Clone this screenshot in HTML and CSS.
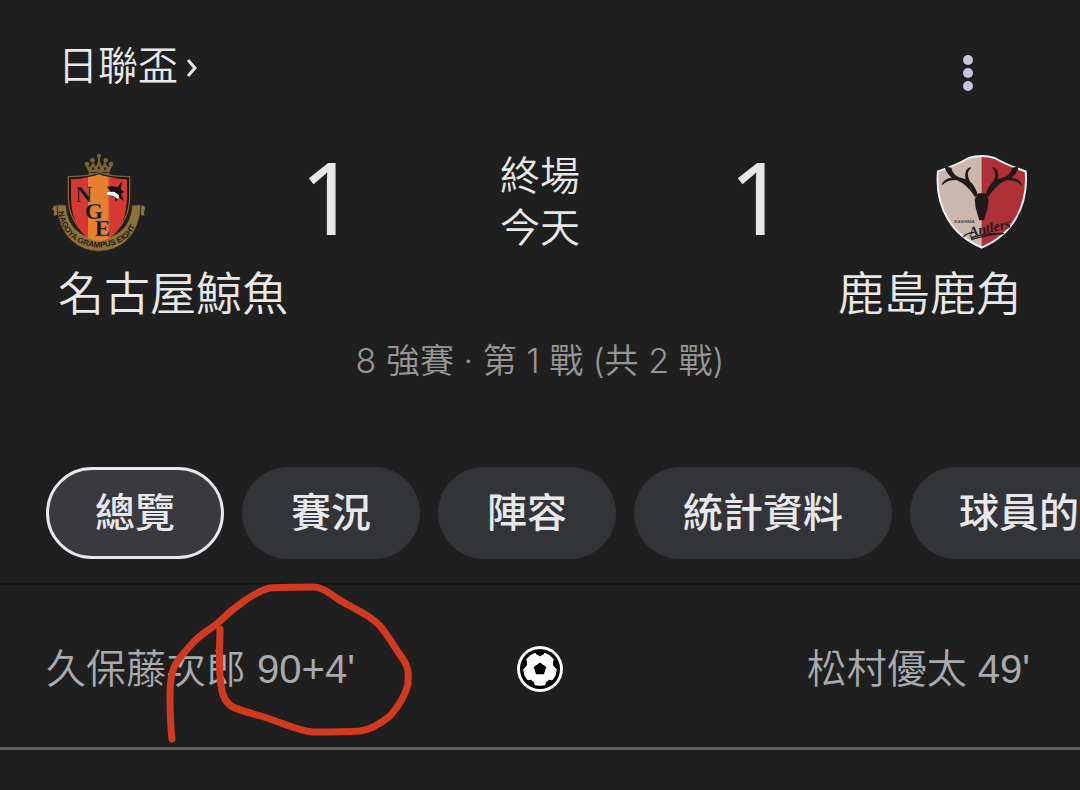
FILE: index.html
```
<!DOCTYPE html>
<html lang="zh-Hant">
<head>
    <meta charset="UTF-8">
    <meta name="viewport" content="width=device-width, initial-scale=1.0">
    <title>名古屋鯨魚 1 - 1 鹿島鹿角</title>
    <link rel="stylesheet" href="styles.css">
</head>
<body>

    <header class="top-bar">
        <a href="#" class="league">日聯盃
            <svg class="chevron" viewBox="0 0 12 18" aria-hidden="true"><path d="M2 1l7 8-7 8"/></svg>
        </a>
        <button type="button" class="menu-btn" aria-label="更多選項">
            <svg viewBox="0 0 10 36"><circle cx="5" cy="5" r="5"/><circle cx="5" cy="18" r="5"/><circle cx="5" cy="31" r="5"/></svg>
        </button>
    </header>

    <main>
        <section class="match">
            <div class="score-row">
                <svg class="crest" viewBox="34 26 279 297" role="img" aria-label="名古屋鯨魚">
                    <!-- crown -->
                    <g fill="#7d6435">
                        <circle cx="175" cy="34" r="6"/><rect x="172" y="38" width="6" height="12"/>
                        <circle cx="139" cy="59" r="7"/><circle cx="155" cy="48" r="7"/><circle cx="195" cy="48" r="7"/><circle cx="211" cy="59" r="7"/>
                        <path d="M134 61l11 24h60l11-24-14 7-10-15-8 14-9-23-9 23-8-14-10 15z"/>
                        <path d="M144 86h62v8h-62z"/>
                    </g>
                    <g fill="#2a2118"><circle cx="157" cy="73" r="4"/><circle cx="175" cy="71" r="4"/><circle cx="193" cy="73" r="4"/><path d="M149 83h52v3h-52z"/></g>
                    <!-- ribbon -->
                    <path d="M49 183l-10 2-4 10 5 5-1 14 10-2zM301 183l10 2 4 10-5 5 1 14-10-2z" fill="#8c713e"/>
                    <path d="M49 181l27 1q4 58 41 83 58 37 116 0 37-25 41-83l27-1q-1 69-44 109-35 31-82 31t-82-31q-43-40-44-109z" fill="#8c713e" stroke="#30281a" stroke-width="3"/>
                    <!-- shield -->
                    <path d="M83 97q55 0 92-13 37 13 92 13v65q-4 95-92 129-88-34-92-129z" fill="#171411" stroke="#806437" stroke-width="4"/>
                    <path d="M91 105q28 0 50-7v182q-48-35-50-118zM209 98q22 7 50 7v57q-2 83-50 118z" fill="#d93830"/>
                    <path d="M141 98q20-2 34-8 14 6 34 8v182q-16 8-34 12-18-4-34-12z" fill="#e6802f"/>
                    <path d="M203 97l6 1v182l-6 3z" fill="#e84136"/>
                    <!-- orca -->
                    <path d="M199 127l18-2 13 4 14-18-4 24 11 7-10 7 9 21-15-10-10 13-3-15-21-5 12-8z" fill="#17120f"/>
                    <path d="M200 143l20-1 16 11-3 12-15-10-18-3z" fill="#fff"/>
                    <g class="monogram">
                        <text x="104" y="172">N</text>
                        <text x="132" y="224">G</text>
                        <text x="162" y="276">E</text>
                    </g>
                    <path id="ribbonLine" d="M53 202Q65 274 119 297 175 322 231 297 287 274 297 194" fill="none"/>
                    <text class="ribbon-text"><textPath href="#ribbonLine">NAGOYA GRAMPUS EIGHT</textPath></text>
                </svg>
                <span class="score home">1</span>
                <p class="status">終場<br>今天</p>
                <span class="score">1</span>
                <svg class="crest" viewBox="31 26 279 297" role="img" aria-label="鹿島鹿角">
                    <clipPath id="shieldLeft"><path d="M30 20h141v300H30z"/></clipPath>
                    <path d="M40 81Q94 63 132 41q39-12 78 0 38 22 93 40 7 80-31 144-32 55-101 85-69-30-101-85Q32 161 40 81z" fill="#ad3136"/>
                    <path d="M40 81Q94 63 132 41q39-12 78 0 38 22 93 40 7 80-31 144-32 55-101 85-69-30-101-85Q32 161 40 81z" fill="#cab8ae" clip-path="url(#shieldLeft)"/>
                    <path d="M40 81Q94 63 132 41q39-12 78 0 38 22 93 40 7 80-31 144-32 55-101 85-69-30-101-85Q32 161 40 81z" fill="none" stroke="#f4f0f0" stroke-width="6"/>
                    <!-- antlers -->
                    <path d="M60 66l20 4q4 20 23 29 12 3 20 6-7-29 14-37l2 3q-16 14-4 39 21 21 24 43l-8 5q-24-39-56-51-29 0-43 16l-1-3q6-17 30-20-18-14-21-34z" fill="#1f1a19"/>
                    <path d="M282 66l-20 4q-4 20-23 29-12 3-20 6 7-29-14-37l-2 3q16 14 4 39-21 21-24 43l8 5q24-39 56-51 29 0 43 16l1-3q-6-17-30-20 18-14 21-34z" fill="#1f1a19"/>
                    <path d="M161 147h20l11 17-3 27-11 37h-14l-11-37-3-27z" fill="#1f1a19"/>
                    <text class="kashima" x="89" y="236">KASHIMA</text>
                    <text class="antlers" x="136" y="277" transform="rotate(-12 136 277)">Antlers</text>
                    <path d="M116 278q10-13 32-14M140 280q50-16 98-12-54 4-96 17z" fill="none" stroke="#1f1a19" stroke-width="4"/>
                </svg>
            </div>
            <div class="team-names">
                <h2>名古屋鯨魚</h2>
                <h2>鹿島鹿角</h2>
            </div>
            <p class="round">8 強賽 · 第 1 戰 (共 2 戰)</p>
        </section>

        <nav class="tabs">
            <button type="button" class="tab active" aria-current="true">總覽</button>
            <button type="button" class="tab">賽況</button>
            <button type="button" class="tab">陣容</button>
            <button type="button" class="tab">統計資料</button>
            <button type="button" class="tab">球員的</button>
        </nav>

        <section class="scorers">
            <p>久保藤次郎 90+4'</p>
            <svg class="ball" viewBox="49 47 140 140" role="img" aria-label="進球">
                <circle cx="119" cy="117" r="70" fill="#fff"/>
                <circle cx="119" cy="117" r="61" fill="#000"/>
                <circle cx="119" cy="117" r="51" fill="#fff"/>
                <path d="M105 64l3 9 11 5 11-5 3-9zM168 84l-9 8 0 14 11 12 4-14zM156 151l-10-1-9 8-2 11 15-4zM82 151l10-1 9 8 2 11-15-4zM70 84l9 8 0 14-11 12-4-14z" fill="#000"/>
                <path d="M119 97l19 14-7 22h-24l-7-22z" fill="#000"/>
            </svg>
            <p class="away">松村優太 49'</p>
            <!-- hand-drawn mark around the goal time -->
            <svg class="marker" viewBox="165 583 250 162" aria-hidden="true">
                <path d="M172 739C170 722 170 710 170 695C170 665 178 660 190 646C202 632 209 631 219 622C234 607 256 591 270 588C282 587 298 587 313 587C325 587 333 597 343 602C356 610 369 614 379 625C387 633 396 650 403 659C410 669 408 676 408 684C405 697 397 708 390 716C380 724 371 730 360 731C345 732 328 732 313 732C297 731 281 722 264 717C254 714 241 711 233 707C225 703 222 694 221 685C218 666 220 646 220 629"/>
            </svg>
        </section>
    </main>

</body>
</html>
```
FILE: styles.css
```
* {
    box-sizing: border-box;
}

body {
    margin: 0;
    background-color: #1f1f1f;
    color: #e8e8e8;
    font-family: "Liberation Sans", "Noto Sans CJK TC", sans-serif;
    font-size: 40px;
    font-weight: 350;
    overflow-x: hidden;
}

h2, p {
    margin: 0;
    font-weight: 350;
}

.top-bar {
    display: flex;
    justify-content: space-between;
    align-items: flex-start;
    padding: 36px 88px 0 58px;
}

.league {
    display: flex;
    align-items: center;
    gap: 8px;
    color: inherit;
    line-height: 60px;
    text-decoration: none;
}

.chevron {
    width: 12px;
    height: 18px;
    margin-top: 4px;
    fill: none;
    stroke: #e8e8e8;
    stroke-width: 3;
}

.menu-btn {
    width: 48px;
    height: 74px;
    padding: 0;
    border: none;
    background: none;
    cursor: pointer;
}

.menu-btn svg {
    display: block;
    width: 10px;
    height: 36px;
    margin: 0 auto;
    fill: #c5c6da;
}

.score-row {
    display: grid;
    grid-template-columns: 93px 1fr auto 1fr 93px;
    align-items: center;
    margin-top: 40px;
    padding: 0 52px;
}

.crest {
    width: 93px;
    height: 99px;
}

.score {
    align-self: start;
    font-family: "Noto Sans", sans-serif;
    font-size: 100px;
    font-weight: 400;
    line-height: 92px;
    text-align: center;
}

.score.home {
    padding-left: 12px;
}

.status {
    line-height: 52px;
}

.monogram {
    font: bold 70px "Liberation Serif", serif;
    fill: #191512;
    stroke: #77706a;
    stroke-width: 1;
}

.ribbon-text {
    font: bold 24px "Liberation Sans", sans-serif;
    fill: #241c10;
}

.kashima {
    font: bold 13px "Liberation Sans", sans-serif;
    fill: #4b403d;
}

.antlers {
    font: italic bold 42px "Liberation Serif", serif;
    fill: #1f1a19;
}

.team-names {
    display: flex;
    justify-content: space-between;
    margin-top: 10px;
    padding: 0 58px;
}

.team-names h2 {
    font-size: 46px;
    line-height: 60px;
}

.round {
    margin-top: 17px;
    color: #969696;
    font-family: Inter, "Noto Sans CJK TC", sans-serif;
    font-size: 34px;
    line-height: 40px;
    text-align: center;
}

.tabs {
    display: flex;
    gap: 18px;
    margin-top: 86px;
    padding: 0 0 24px 46px;
    border-bottom: 2px solid #171717;
    overflow: hidden;
}

.tab {
    flex: none;
    height: 92px;
    padding: 0 49px 6px;
    border: none;
    border-radius: 46px;
    background-color: #333438;
    color: #e8e8ec;
    font-family: inherit;
    font-size: 40px;
    font-weight: 500;
    cursor: pointer;
}

.tab.active {
    padding: 0 46px 6px;
    border: 3px solid #e8e8ec;
    background-color: #3a393e;
}

.scorers {
    position: relative;
    display: grid;
    grid-template-columns: 1fr 46px 1fr;
    align-items: center;
    padding: 54px 46px 48px;
    border-bottom: 3px solid #5f6066;
    color: #a9aab0;
    line-height: 60px;
}

.ball {
    width: 46px;
    height: 46px;
}

.away {
    padding-right: 4px;
    text-align: right;
}

.marker {
    position: absolute;
    top: -2px;
    left: 165px;
    width: 250px;
    height: 162px;
    fill: none;
    stroke: #d23a20;
    stroke-width: 7;
    stroke-linecap: round;
    stroke-linejoin: round;
}
```
